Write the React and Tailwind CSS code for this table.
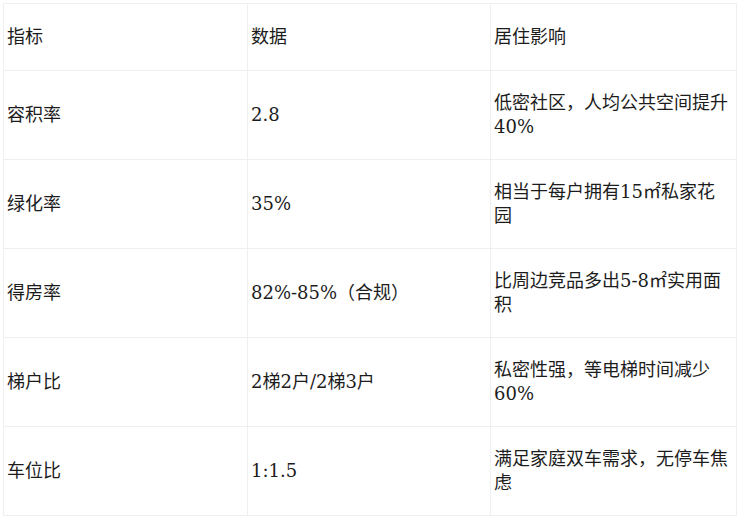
import React from 'react';

const rows = [
  ['容积率', '2.8', '低密社区，人均公共空间提升40%'],
  ['绿化率', '35%', '相当于每户拥有15㎡私家花园'],
  ['得房率', '82%-85%（合规）', '比周边竞品多出5-8㎡实用面积'],
  ['梯户比', '2梯2户/2梯3户', '私密性强，等电梯时间减少60%'],
  ['车位比', '1:1.5', '满足家庭双车需求，无停车焦虑'],
];

const cell = 'border border-[#efefef] pl-[3px] pr-[6px] align-middle text-left font-normal';

const App = () => {
  return (
    <div className="w-[740px] h-[518px] bg-white p-[3px] font-['DejaVu_Serif','Noto_Sans_CJK_SC',serif] text-[18px] leading-6 text-[#1c1c1c]">
      <table className="w-full table-fixed border-collapse">
        <thead>
          <tr className="h-[67px]">
            <th className={`${cell} w-[244px]`}>指标</th>
            <th className={`${cell} w-[243px]`}>数据</th>
            <th className={cell}>居住影响</th>
          </tr>
        </thead>
        <tbody>
          {rows.map((r) => (
            <tr key={r[0]} className="h-[89px]">
              <td className={cell}>{r[0]}</td>
              <td className={cell}>{r[1]}</td>
              <td className={cell}>{r[2]}</td>
            </tr>
          ))}
        </tbody>
      </table>
    </div>
  );
};

export default App;
